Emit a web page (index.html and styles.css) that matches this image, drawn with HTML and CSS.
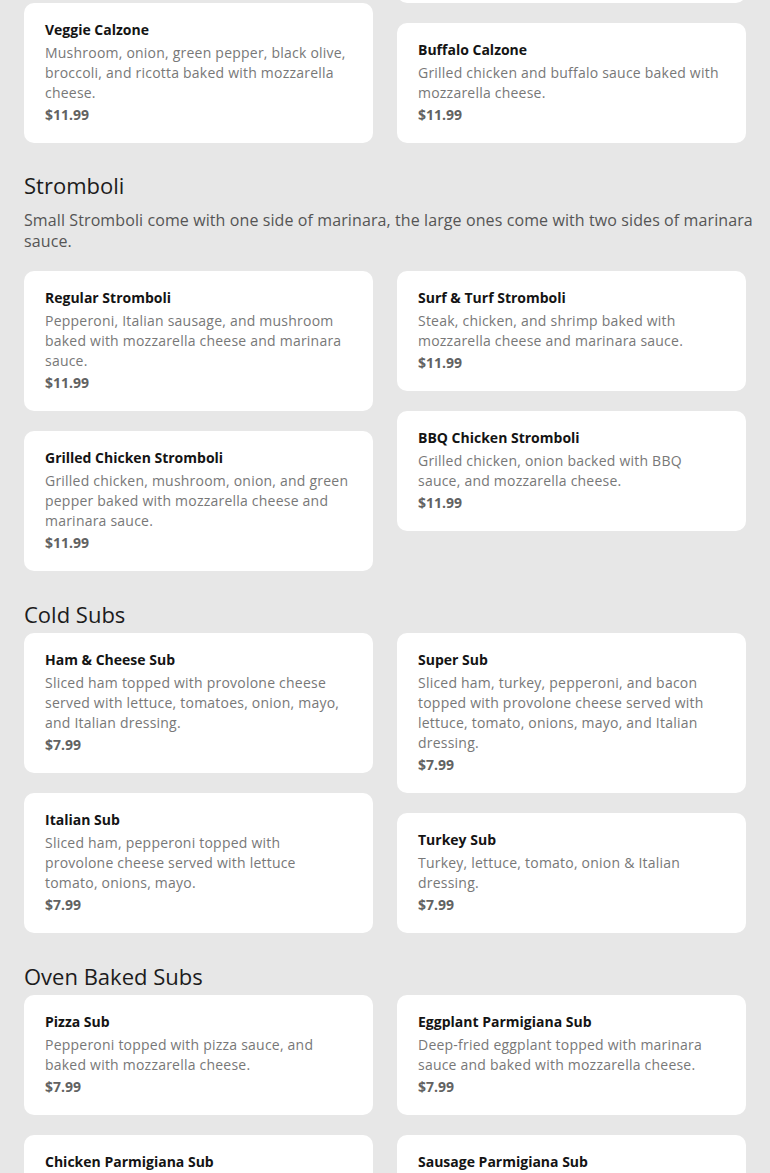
FILE: index.html
```html
<!DOCTYPE html>
<html lang="en">
<head>
<meta charset="utf-8">
<title>Menu</title>
<link rel="stylesheet" href="styles.css">
</head>
<body>
<main class="menu">
  <section class="section section--scrolled">
    <div class="grid">
      <div class="col">
        <article class="card">
          <h3 class="card-title">Cheese Calzone</h3>
          <p class="card-desc">Ricotta and mozzarella cheese baked with marinara sauce.</p>
          <p class="card-price">$11.99</p>
        </article>
        <article class="card">
          <h3 class="card-title">Veggie Calzone</h3>
          <p class="card-desc">Mushroom, onion, green pepper, black olive, broccoli, and ricotta baked with mozzarella cheese.</p>
          <p class="card-price">$11.99</p>
        </article>
      </div>
      <div class="col">
        <article class="card">
          <h3 class="card-title">Meat Lovers Calzone</h3>
          <p class="card-desc">Pepperoni, Italian sausage, ham, meatball, and bacon baked with ricotta and mozzarella cheese.</p>
          <p class="card-price">$11.99</p>
        </article>
        <article class="card">
          <h3 class="card-title">Buffalo Calzone</h3>
          <p class="card-desc">Grilled chicken and buffalo sauce baked with mozzarella cheese.</p>
          <p class="card-price">$11.99</p>
        </article>
      </div>
    </div>
  </section>

  <section class="section">
    <h2 class="section-title">Stromboli</h2>
    <p class="section-desc">Small Stromboli come with one side of marinara, the large ones come with two sides of marinara sauce.</p>
    <div class="grid">
      <div class="col">
        <article class="card">
          <h3 class="card-title">Regular Stromboli</h3>
          <p class="card-desc">Pepperoni, Italian sausage, and mushroom baked with mozzarella cheese and marinara sauce.</p>
          <p class="card-price">$11.99</p>
        </article>
        <article class="card">
          <h3 class="card-title">Grilled Chicken Stromboli</h3>
          <p class="card-desc">Grilled chicken, mushroom, onion, and green pepper baked with mozzarella cheese and marinara sauce.</p>
          <p class="card-price">$11.99</p>
        </article>
      </div>
      <div class="col">
        <article class="card">
          <h3 class="card-title">Surf &amp; Turf Stromboli</h3>
          <p class="card-desc">Steak, chicken, and shrimp baked with mozzarella cheese and marinara sauce.</p>
          <p class="card-price">$11.99</p>
        </article>
        <article class="card">
          <h3 class="card-title">BBQ Chicken Stromboli</h3>
          <p class="card-desc">Grilled chicken, onion backed with BBQ sauce, and mozzarella cheese.</p>
          <p class="card-price">$11.99</p>
        </article>
      </div>
    </div>
  </section>

  <section class="section">
    <h2 class="section-title">Cold Subs</h2>
    <div class="grid">
      <div class="col">
        <article class="card">
          <h3 class="card-title">Ham &amp; Cheese Sub</h3>
          <p class="card-desc">Sliced ham topped with provolone cheese served with lettuce, tomatoes, onion, mayo, and Italian dressing.</p>
          <p class="card-price">$7.99</p>
        </article>
        <article class="card">
          <h3 class="card-title">Italian Sub</h3>
          <p class="card-desc">Sliced ham, pepperoni topped with provolone cheese served with lettuce tomato, onions, mayo.</p>
          <p class="card-price">$7.99</p>
        </article>
      </div>
      <div class="col">
        <article class="card">
          <h3 class="card-title">Super Sub</h3>
          <p class="card-desc">Sliced ham, turkey, pepperoni, and bacon topped with provolone cheese served with lettuce, tomato, onions, mayo, and Italian dressing.</p>
          <p class="card-price">$7.99</p>
        </article>
        <article class="card">
          <h3 class="card-title">Turkey Sub</h3>
          <p class="card-desc">Turkey, lettuce, tomato, onion &amp; Italian dressing.</p>
          <p class="card-price">$7.99</p>
        </article>
      </div>
    </div>
  </section>

  <section class="section">
    <h2 class="section-title">Oven Baked Subs</h2>
    <div class="grid">
      <div class="col">
        <article class="card">
          <h3 class="card-title">Pizza Sub</h3>
          <p class="card-desc">Pepperoni topped with pizza sauce, and baked with mozzarella cheese.</p>
          <p class="card-price">$7.99</p>
        </article>
        <article class="card">
          <h3 class="card-title">Chicken Parmigiana Sub</h3>
          <p class="card-desc">Breaded chicken topped with marinara sauce and baked with mozzarella cheese.</p>
          <p class="card-price">$7.99</p>
        </article>
      </div>
      <div class="col">
        <article class="card">
          <h3 class="card-title">Eggplant Parmigiana Sub</h3>
          <p class="card-desc">Deep-fried eggplant topped with marinara sauce and baked with mozzarella cheese.</p>
          <p class="card-price">$7.99</p>
        </article>
        <article class="card">
          <h3 class="card-title">Sausage Parmigiana Sub</h3>
          <p class="card-desc">Italian sausage topped with marinara sauce and baked with mozzarella cheese.</p>
          <p class="card-price">$7.99</p>
        </article>
      </div>
    </div>
  </section>
</main>
</body>
</html>
```
FILE: styles.css
```css
* { box-sizing: border-box; }

html, body {
  margin: 0;
  padding: 0;
  background: #e7e7e7;
}

body {
  font-family: "Open Sans", "Liberation Sans", sans-serif;
  color: #1a1a1a;
  overflow: hidden;
}

.menu {
  padding: 0 24px 40px;
  display: flex;
  flex-direction: column;
  gap: 28.5px;
}

.section--scrolled {
  margin-top: -137.3px;
}

.section-title {
  margin: 0 0 5.5px;
  font-size: 22px;
  line-height: 28px;
  font-weight: 400;
  color: #1c1c1c;
}

.section-desc {
  margin: 10.5px -20px 19.5px 0;
  font-size: 16px;
  line-height: 21px;
  letter-spacing: 0.1px;
  color: #555555;
}

.grid {
  display: grid;
  grid-template-columns: 1fr 1fr;
  column-gap: 24px;
  align-items: start;
}

.col {
  display: flex;
  flex-direction: column;
  gap: 20px;
}

.card {
  background: #ffffff;
  border-radius: 10px;
  padding: 17px 21px 18px;
}

.card-title {
  margin: 0 0 3px;
  font-size: 14px;
  line-height: 20px;
  font-weight: 700;
  color: #141414;
}

.card-desc {
  margin: 0 0 2px;
  font-size: 14px;
  line-height: 20px;
  letter-spacing: 0.22px;
  color: #787878;
}

.card-price {
  margin: 0;
  font-size: 14px;
  line-height: 20px;
  font-weight: 700;
  color: #626262;
}
```
